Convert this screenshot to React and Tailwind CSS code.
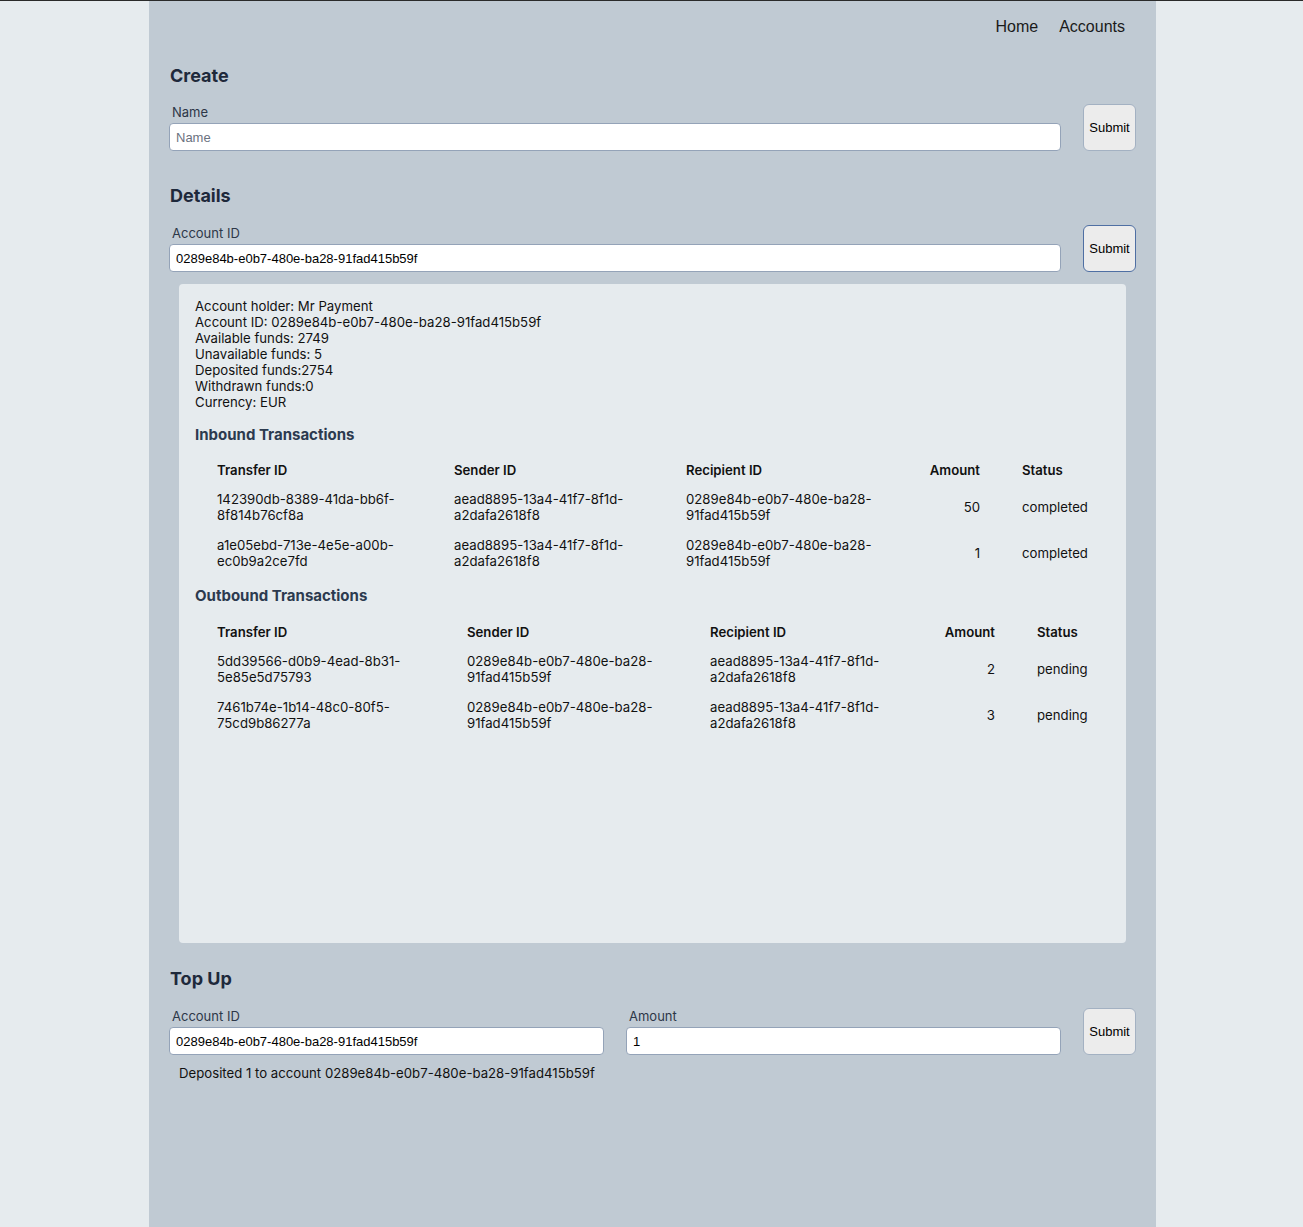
import React from 'react';

const accountId = '0289e84b-e0b7-480e-ba28-91fad415b59f';

const inbound = [
  { id: '142390db-8389-41da-bb6f-8f814b76cf8a', sender: 'aead8895-13a4-41f7-8f1d-a2dafa2618f8', recipient: accountId, amount: 50, status: 'completed' },
  { id: 'a1e05ebd-713e-4e5e-a00b-ec0b9a2ce7fd', sender: 'aead8895-13a4-41f7-8f1d-a2dafa2618f8', recipient: accountId, amount: 1, status: 'completed' },
];

const outbound = [
  { id: '5dd39566-d0b9-4ead-8b31-5e85e5d75793', sender: accountId, recipient: 'aead8895-13a4-41f7-8f1d-a2dafa2618f8', amount: 2, status: 'pending' },
  { id: '7461b74e-1b14-48c0-80f5-75cd9b86277a', sender: accountId, recipient: 'aead8895-13a4-41f7-8f1d-a2dafa2618f8', amount: 3, status: 'pending' },
];

const inter = "font-['Inter','Noto_Sans',sans-serif]";
const arial = "font-['Liberation_Sans',Arial,sans-serif]";

const Heading = ({ children, className = '' }) => (
  <h2 className={`text-[18px] leading-[22px] font-bold text-[#1e293b] ${className}`}>{children}</h2>
);

const Field = ({ label, value, placeholder }) => (
  <div className="flex-1 flex flex-col">
    <label className="pl-[3px] text-[13px] leading-[16px] text-[#2d3748]">{label}</label>
    <input
      readOnly
      defaultValue={value}
      placeholder={placeholder}
      className={`mt-[3px] h-[28px] w-full rounded-[4px] border border-[#94a3b8] bg-white px-[6px] text-[13px] text-black placeholder:text-[#6b7280] outline-none ${arial}`}
    />
  </div>
);

const SubmitButton = ({ focused }) => (
  <button
    className={`w-[53px] self-stretch rounded-[6px] border ${focused ? 'border-[#4f6fa3]' : 'border-[#a3b1c2]'} bg-[#ececec] text-[13px] text-black ${arial}`}
  >
    Submit
  </button>
);

const TxTable = ({ rows, cols, className = '' }) => (
  <div className={`ml-[22px] grid ${cols} text-[13.2px] leading-[16px] text-[#111] ${className}`}>
    <div className="py-[6px] font-semibold">Transfer ID</div>
    <div className="py-[6px] font-semibold">Sender ID</div>
    <div className="py-[6px] font-semibold">Recipient ID</div>
    <div className="py-[6px] text-right font-semibold">Amount</div>
    <div className="py-[6px] pl-[42px] font-semibold">Status</div>
    {rows.map((r) => (
      <React.Fragment key={r.id}>
        <div className="py-[7px] pr-[20px]">{r.id}</div>
        <div className="py-[7px] pr-[20px]">{r.sender}</div>
        <div className="py-[7px] pr-[20px]">{r.recipient}</div>
        <div className="flex items-center justify-end py-[7px]">{r.amount}</div>
        <div className="flex items-center py-[7px] pl-[42px]">{r.status}</div>
      </React.Fragment>
    ))}
  </div>
);

export default function App() {
  return (
    <div className={`min-h-screen border-t border-[#2a2a2a] bg-[#e6ebee] ${inter}`}>
      <div className="ml-[149px] min-h-[1226px] w-[1007px] bg-[#c0cad3] pb-10 pl-[20px] pr-[20px]">
        <nav className={`flex h-[51px] items-center justify-end gap-[21px] text-[16px] text-[#1a1a1a] ${arial}`}>
          <a>Home</a>
          <a className="pr-[11px]">Accounts</a>
        </nav>

        <section>
          <Heading className="mt-[13px] pl-[1px]">Create</Heading>
          <div className="mt-[17px] flex gap-[22px]">
            <Field label="Name" placeholder="Name" />
            <SubmitButton />
          </div>
        </section>

        <section>
          <Heading className="mt-[34px] pl-[1px]">Details</Heading>
          <div className="mt-[18px] flex gap-[22px]">
            <Field label="Account ID" value={accountId} />
            <SubmitButton focused />
          </div>
          <div className="mx-[10px] mt-[12px] h-[659px] rounded-[4px] bg-[#e6ebee] px-[16px] pt-[14px]">
            <div className="text-[13.2px] leading-[16px] text-[#111]">
              <div>Account holder: Mr Payment</div>
              <div>Account ID: {accountId}</div>
              <div>Available funds: 2749</div>
              <div>Unavailable funds: 5</div>
              <div>Deposited funds:2754</div>
              <div>Withdrawn funds:0</div>
              <div>Currency: EUR</div>
            </div>
            <h3 className="mt-[15px] text-[15px] leading-[20px] font-bold text-[#2c3a4f]">Inbound Transactions</h3>
            <TxTable className="mt-[11px]" rows={inbound} cols="grid-cols-[237px_232px_214px_80px_140px]" />
            <h3 className="mt-[10px] text-[15px] leading-[20px] font-bold text-[#2c3a4f]">Outbound Transactions</h3>
            <TxTable className="mt-[12px]" rows={outbound} cols="grid-cols-[250px_243px_205px_80px_140px]" />
          </div>
        </section>

        <section>
          <Heading className="mt-[25px] pl-[1px]">Top Up</Heading>
          <div className="mt-[18px] flex gap-[22px]">
            <Field label="Account ID" value={accountId} />
            <Field label="Amount" value="1" />
            <SubmitButton />
          </div>
          <p className="mt-[10px] pl-[10px] text-[13.2px] leading-[16px] text-[#111]">
            Deposited 1 to account {accountId}
          </p>
        </section>
      </div>
    </div>
  );
}
